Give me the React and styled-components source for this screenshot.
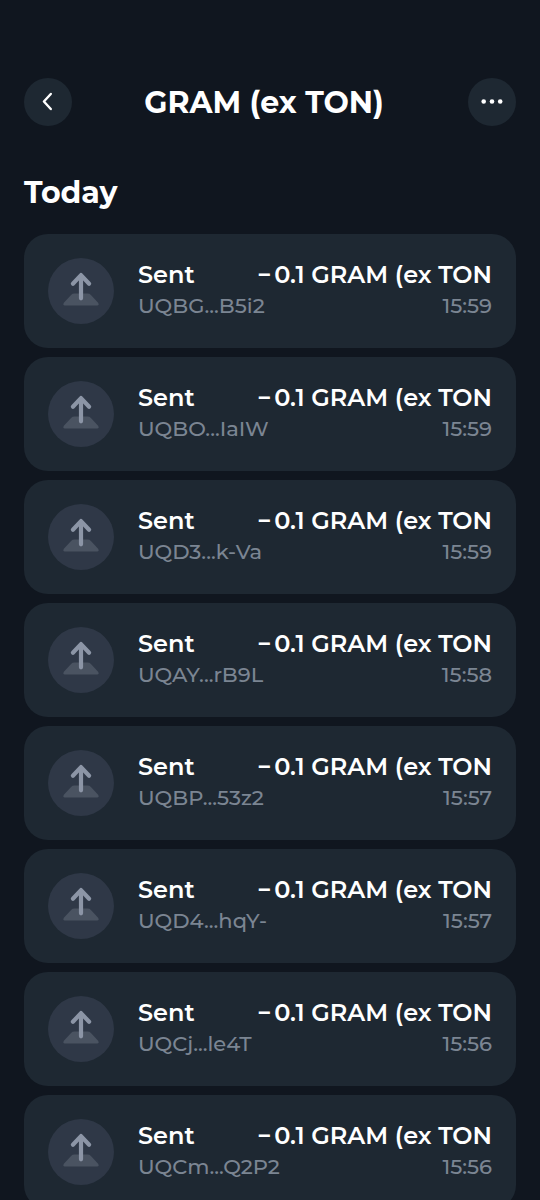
import React from "react";
import styled, { createGlobalStyle } from "styled-components";

const transactions = [
  { address: "UQBG...B5i2", time: "15:59" },
  { address: "UQBO...IaIW", time: "15:59" },
  { address: "UQD3...k-Va", time: "15:59" },
  { address: "UQAY...rB9L", time: "15:58" },
  { address: "UQBP...53z2", time: "15:57" },
  { address: "UQD4...hqY-", time: "15:57" },
  { address: "UQCj...le4T", time: "15:56" },
  { address: "UQCm...Q2P2", time: "15:56" },
];

function BackIcon() {
  return (
    <svg width="24" height="24" viewBox="0 0 24 24" fill="none">
      <path
        d="M14.8 4 7.9 11.5l6.9 7.5"
        stroke="#fff"
        strokeWidth="2.4"
        strokeLinecap="round"
        strokeLinejoin="round"
      />
    </svg>
  );
}

function MoreIcon() {
  return (
    <svg width="24" height="24" viewBox="0 0 24 24" fill="#fff">
      <circle cx="3.7" cy="11.5" r="2.3" />
      <circle cx="12" cy="11.5" r="2.3" />
      <circle cx="20.2" cy="11.5" r="2.3" />
    </svg>
  );
}

function SentIcon() {
  return (
    <svg width="66" height="66" viewBox="0 0 66 66" fill="none">
      <path
        d="M26.5 35.6h13q2 0 3.4 1.4l7.2 7.800q1.600 2.600-1 2.600H16.900q-2.600 0-1-2.600l7.200-7.800q1.400-1.400 3.400-1.400z"
        fill="#4a5361"
      />
      <path
        d="M33 40.300V17.400M24.900 25.800 33 17.100l8.100 8.700"
        stroke="#8c95a6"
        strokeWidth="4.2"
        strokeLinecap="round"
        strokeLinejoin="round"
      />
    </svg>
  );
}

export default function App() {
  return (
    <Page>
      <GlobalStyle />
      <Header>
        <RoundButton aria-label="Back">
          <BackIcon />
        </RoundButton>
        <Title>GRAM (ex TON)</Title>
        <RoundButton aria-label="More">
          <MoreIcon />
        </RoundButton>
      </Header>
      <SectionTitle>Today</SectionTitle>
      <List>
        {transactions.map((item) => (
          <Card key={item.address}>
            <IconCircle>
              <SentIcon />
            </IconCircle>
            <Info>
              <Row>
                <Label>Sent</Label>
                <Label>
                  <Minus>−</Minus>0.1 GRAM (ex TON
                </Label>
              </Row>
              <Row>
                <Secondary>{item.address}</Secondary>
                <Secondary>{item.time}</Secondary>
              </Row>
            </Info>
          </Card>
        ))}
      </List>
    </Page>
  );
}

const GlobalStyle = createGlobalStyle`
  * {
    box-sizing: border-box;
  }

  body {
    margin: 0;
    background: #10161f;
    font-family: Montserrat, Inter, sans-serif;
    color: #ffffff;
  }
`;

const Page = styled.div`
  width: 540px;
  height: 1200px;
  padding: 77.6px 24px 0;
  overflow: hidden;
`;

const Header = styled.div`
  display: flex;
  align-items: center;
  justify-content: space-between;
  height: 48px;
`;

const RoundButton = styled.button`
  display: flex;
  align-items: center;
  justify-content: center;
  width: 48px;
  height: 48px;
  padding: 0;
  border: none;
  border-radius: 50%;
  background: #1e2832;
`;

const Title = styled.h1`
  margin: 0 12px 0 0;
  padding-top: 2px;
  font-weight: 700;
  font-size: 30px;
  line-height: 48px;
  white-space: nowrap;
`;

const SectionTitle = styled.h2`
  margin: 49px 0 0;
  font-weight: 700;
  font-size: 30px;
  line-height: 36px;
`;

const List = styled.div`
  display: flex;
  flex-direction: column;
  gap: 9px;
  margin-top: 23px;
`;

const Card = styled.div`
  display: flex;
  flex-shrink: 0;
  gap: 24px;
  height: 114px;
  padding: 24px;
  border-radius: 24px;
  background: #1e2832;
`;

const IconCircle = styled.div`
  flex-shrink: 0;
  width: 66px;
  height: 66px;
  border-radius: 50%;
  background: #2f3847;
`;

const Info = styled.div`
  flex: 1;
  min-width: 0;
`;

const Row = styled.div`
  display: flex;
  justify-content: space-between;
  height: 32px;
  line-height: 32px;
  white-space: nowrap;
`;

const Label = styled.span`
  font-weight: 600;
  font-size: 24px;
  line-height: 34px;
`;

const Minus = styled.span`
  margin-right: 3px;
`;

const Secondary = styled.span`
  font-weight: 500;
  font-size: 21px;
  color: #7b8592;
`;
